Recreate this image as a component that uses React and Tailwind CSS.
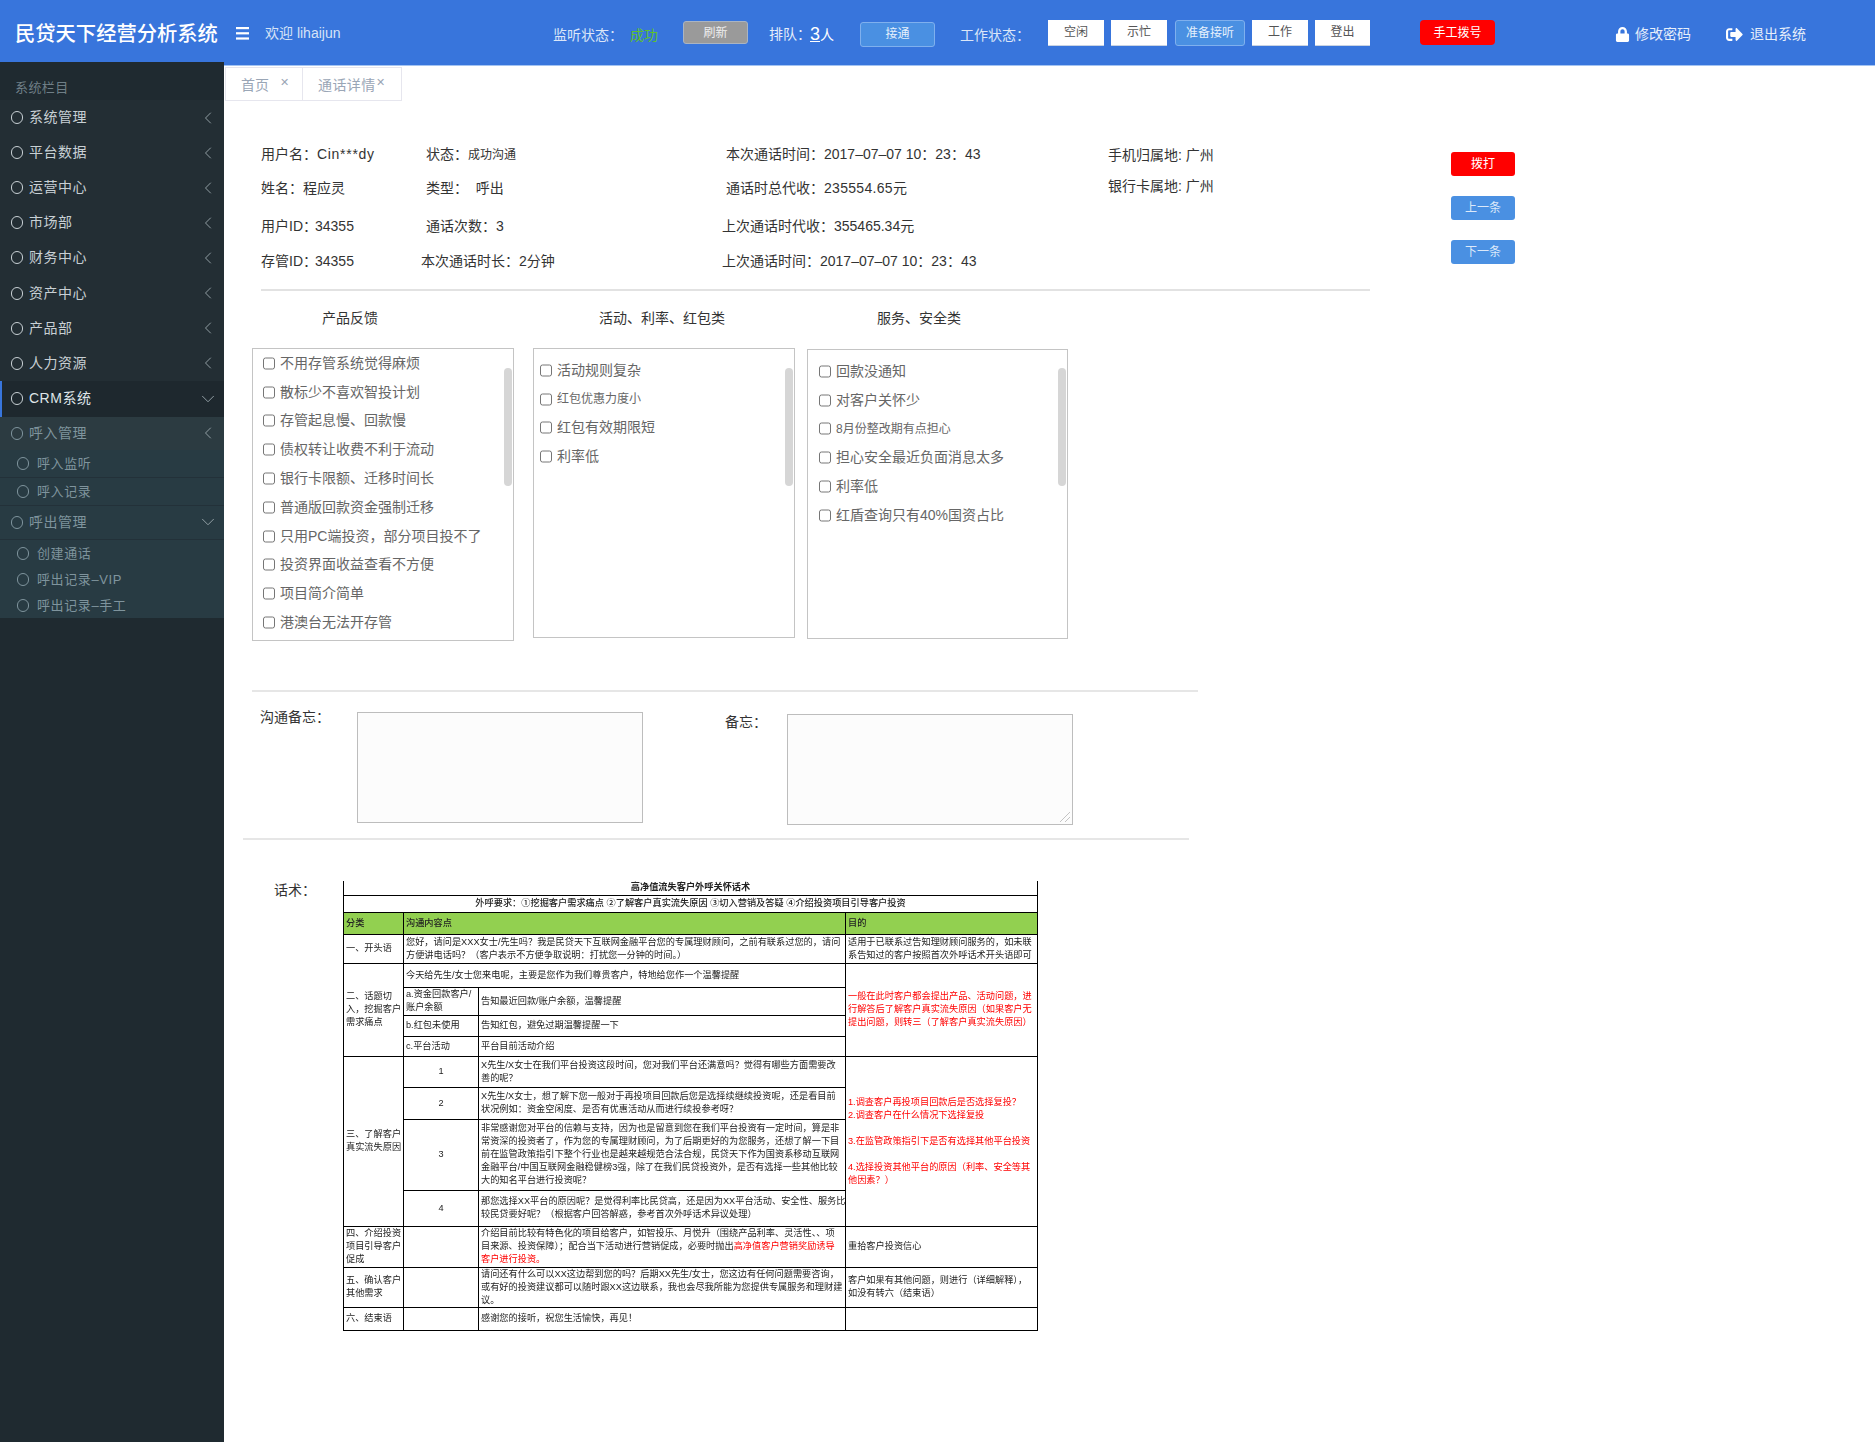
import { ChevronLeft, ChevronDown } from "lucide-react";
import { FaLock, FaSignOutAlt } from "react-icons/fa";

const font = { fontFamily: '"Liberation Sans", "Noto Sans CJK SC", sans-serif' };

const mainMenu = ["系统管理", "平台数据", "运营中心", "市场部", "财务中心", "资产中心", "产品部", "人力资源"];

const feedbackBoxes = [
  {
    title: "产品反馈",
    box: "w-[262px] h-[293px] pl-[10px]",
    bar: "top-[19px]",
    items: [
      "不用存管系统觉得麻烦",
      "散标少不喜欢智投计划",
      "存管起息慢、回款慢",
      "债权转让收费不利于流动",
      "银行卡限额、迁移时间长",
      "普通版回款资金强制迁移",
      "只用PC端投资，部分项目投不了",
      "投资界面收益查看不方便",
      "项目简介简单",
      "港澳台无法开存管",
    ],
  },
  {
    title: "活动、利率、红包类",
    box: "w-[262px] h-[290px] ml-[19px] pt-[7px] pl-[6px]",
    bar: "top-[19px]",
    items: ["活动规则复杂", "红包优惠力度小", "红包有效期限短", "利率低"],
  },
  {
    title: "服务、安全类",
    box: "w-[261px] h-[290px] ml-[12px] mt-[1px] pt-[7px] pl-[11px]",
    bar: "top-[18px]",
    items: ["回款没通知", "对客户关怀少", "8月份整改期有点担心", "担心安全最近负面消息太多", "利率低", "红盾查询只有40%国资占比"],
  },
];

const smallItems = ["红包优惠力度小", "8月份整改期有点担心"];

function Ring({ className = "" }) {
  return <span className={`block h-[13px] w-3 shrink-0 rounded-full border ${className}`} />;
}

function MenuRow({ label, open, className = "", textClass = "text-[#c8d0d4]", ringClass = "border-[#c8d0d4]" }) {
  return (
    <div className={`flex items-center pl-[11px] pr-3 text-[14px] tracking-[0.5px] ${className}`}>
      <Ring className={ringClass} />
      <span className={`ml-1.5 ${textClass}`}>{label}</span>
      {open ? (
        <ChevronDown size={22} strokeWidth={1} className="ml-auto -mr-[7px] text-[#9aa7ad]" />
      ) : (
        <ChevronLeft size={20} strokeWidth={1.1} className="ml-auto -mr-[6px] text-[#9aa7ad]" />
      )}
    </div>
  );
}

function SubRow({ label, className = "" }) {
  return (
    <div className={`flex items-center pl-[17px] text-[13px] tracking-[0.6px] text-[#7f949d] ${className}`}>
      <Ring className="border-[#7f949d]" />
      <span className="ml-2">{label}</span>
    </div>
  );
}

function Sidebar() {
  return (
    <aside className="relative z-10 -mt-[4px] h-[1380px] w-[224px] shrink-0 bg-[#1f2a30]">
      <div className="flex h-[38px] items-end pb-[3px] pl-[15px] text-[13px] tracking-[0.4px] text-[#6f7f87]">系统栏目</div>
      <div className="bg-[#232e34]">
        {mainMenu.map((label) => (
          <MenuRow key={label} label={label} className="h-[35.1px]" />
        ))}
      </div>
      <div className="flex h-[36px] items-center border-l-[2px] border-[#3875dc] bg-[#1e282e] pl-[9px] pr-3 text-[14px] tracking-[0.5px] text-[#dfe5e8]">
        <Ring className="border-[#c8d0d4]" />
        <span className="ml-1.5">CRM系统</span>
        <ChevronDown size={22} strokeWidth={1} className="ml-auto -mr-[7px] text-[#9aa7ad]" />
      </div>
      <MenuRow label="呼入管理" className="h-[33px] bg-[#2c3b41]" textClass="text-[#7f949d]" ringClass="border-[#7f949d]" />
      <div className="bg-[#283b43]">
        <SubRow label="呼入监听" className="h-[28px] border-b border-[#233139]" />
        <SubRow label="呼入记录" className="h-[28px] border-b border-[#233139]" />
        <MenuRow label="呼出管理" open className="h-[34px] border-b border-[#233139]" textClass="text-[#7f949d]" ringClass="border-[#7f949d]" />
        <SubRow label="创建通话" className="h-[27px]" />
        <SubRow label="呼出记录–VIP" className="h-[26px]" />
        <SubRow label="呼出记录–手工" className="h-[25px]" />
      </div>
    </aside>
  );
}

function HeaderButton({ children, className = "" }) {
  return <div className={`flex shrink-0 items-center justify-center rounded-[3px] text-[12px] ${className}`}>{children}</div>;
}

const whiteBtn = "h-[26px] bg-white text-[#555] border-b border-[#c9d3e2]";

function Header() {
  return (
    <header className="flex h-[66px] items-center border-b border-[#a3c3f2] bg-[#3875dc] text-[14px] text-white">
      <div className="mt-[4px] w-[236px] shrink-0 pl-[15px] text-[20.3px] font-medium text-white">民贷天下经营分析系统</div>
      <div className="mt-[2px] w-[29px] shrink-0">
        <svg width="13" height="13" viewBox="0 0 13 13" fill="white">
          <rect y="0" width="13" height="2.2" />
          <rect y="5.2" width="13" height="2.2" />
          <rect y="10.4" width="13" height="2.2" />
        </svg>
      </div>
      <div className="mt-[2px] w-[288px] shrink-0 text-[#d6e3f7]">欢迎 lihaijun</div>
      <div className="mt-[6px] w-[77px] shrink-0 text-[#dbe6f8]">监听状态：</div>
      <div className="mt-[6px] w-[53px] shrink-0 text-[#5fc02c]">成功</div>
      <HeaderButton className="h-[23px] w-[65px] border border-[#aab4c2] bg-[#9a9a9a] text-[#eeeeee]">刷新</HeaderButton>
      <div className="ml-[21px] mt-[4px] w-[41px] shrink-0 whitespace-nowrap text-[#e6eefa]">排队：</div>
      <div className="mt-[4px] w-[50px] shrink-0 text-[14px]">
        <span className="text-[18px] underline">3</span>人
      </div>
      <HeaderButton className="mt-[3px] h-[25px] w-[75px] border border-[#7fb0ee] bg-[#4a90e2] text-[#e6f0fc]">接通</HeaderButton>
      <div className="ml-[25px] mt-[5px] w-[88px] shrink-0 text-[#dbe6f8]">工作状态：</div>
      <HeaderButton className={`${whiteBtn} w-[56px] rounded-none`}>空闲</HeaderButton>
      <HeaderButton className={`${whiteBtn} ml-[7px] w-[56px] rounded-none`}>示忙</HeaderButton>
      <HeaderButton className="ml-[8px] h-[26px] w-[70px] border border-[#7fb0ee] bg-[#4a90e2] text-[#e6f0fc]">准备接听</HeaderButton>
      <HeaderButton className={`${whiteBtn} ml-[7px] w-[56px] rounded-none`}>工作</HeaderButton>
      <HeaderButton className={`${whiteBtn} ml-[7px] w-[55px] rounded-none`}>登出</HeaderButton>
      <HeaderButton className="ml-[50px] h-[25px] w-[75px] rounded-[4px] bg-[#ff0000] text-white">手工拨号</HeaderButton>
      <FaLock size={15} className="ml-[120px] mt-[3px] shrink-0 text-white" />
      <span className="ml-[5px] mt-[3px] shrink-0 text-[#e6eefa]">修改密码</span>
      <FaSignOutAlt size={17} className="ml-[35px] mt-[3px] shrink-0 text-white" />
      <span className="ml-[7px] mt-[3px] shrink-0 text-[#e6eefa]">退出系统</span>
    </header>
  );
}

function Tabs() {
  return (
    <div className="flex h-[34px] text-[14px] text-[#9aa6b6]">
      <div className="flex w-[78px] items-center border border-[#e6e6ee] pl-[15px] pt-[2px]">
        首页
        <span className="-mt-[6px] ml-[11px] text-[11px]">✕</span>
      </div>
      <div className="flex w-[99px] items-center border border-l-0 border-[#e6e6ee] pl-[15px] pt-[2px] tracking-[0.4px]">
        通话详情
        <span className="-mt-[6px] text-[11px]">✕</span>
      </div>
    </div>
  );
}

function InfoBlock() {
  const rows = [
    { h: "h-[34px]", cols: [<>用户名：<span className="tracking-[0.7px]">Cin***dy</span></>, <>状态：<span className="text-[12px]">成功沟通</span></>, "本次通话时间：2017–07–07 10：23：43"] },
    { h: "h-[34px]", cols: ["姓名：程应灵", "类型：  呼出", <>通话时总代收：<span className="tracking-[0.3px]">235554.65元</span></>] },
    { h: "h-[42px]", cols: [<>用户ID：<span className="-ml-[2px]">34355</span></>, "通话次数：3", <span className="-ml-1">上次通话时代收：355465.34元</span>] },
    { h: "h-[28px]", cols: [<>存管ID：<span className="-ml-[2px]">34355</span></>, <span className="-ml-[5px]">本次通话时长：2分钟</span>, <span className="-ml-1">上次通话时间：2017–07–07 10：23：43</span>] },
  ];
  return (
    <div className="mt-[36px] flex pl-[36px] text-[14px] text-[#333]">
      <div className="w-[847px] shrink-0">
        {rows.map((row, i) => (
          <div key={i} className={`grid grid-cols-[165px_300px_382px] items-center whitespace-pre ${row.h}`}>
            {row.cols.map((col, j) => (
              <div key={j}>{col}</div>
            ))}
          </div>
        ))}
      </div>
      <div className="w-[343px] shrink-0 pt-[3px] leading-[31px]">
        <div>手机归属地: 广州</div>
        <div>银行卡属地: 广州</div>
      </div>
      <div className="flex w-[64px] flex-col gap-5 pt-[15px] text-[12px] text-white">
        <div className="flex h-6 items-center justify-center rounded-[3px] bg-[#ff0000]">拨打</div>
        <div className="flex h-6 items-center justify-center rounded-[3px] bg-[#4a90e2] text-[#dce9fa]">上一条</div>
        <div className="flex h-6 items-center justify-center rounded-[3px] bg-[#4a90e2] text-[#dce9fa]">下一条</div>
      </div>
    </div>
  );
}

function Feedback() {
  return (
    <>
      <div className="mt-[17px] flex h-5 items-center pl-[97px] text-[14px] leading-5 text-[#333]">
        <span className="w-[277px] shrink-0">产品反馈</span>
        <span className="w-[278px] shrink-0">活动、利率、红包类</span>
        <span className="shrink-0">服务、安全类</span>
      </div>
      <div className="mt-[20px] flex items-start pl-[27px]">
        {feedbackBoxes.map((group) => (
          <div key={group.title} className={`relative shrink-0 border border-[#c4c4c4] ${group.box}`}>
            {group.items.map((item) => (
              <label key={item} className="flex h-[28.8px] items-center gap-[5px] text-[14px] text-[#666]">
                <input type="checkbox" className="m-0 h-[13px] w-[12px] shrink-0" readOnly />
                <span className={smallItems.includes(item) ? "text-[12px]" : ""}>{item}</span>
              </label>
            ))}
            <div className={`absolute right-[1px] w-2 h-[118px] rounded-full bg-[#d6d6d6] ${group.bar}`} />
          </div>
        ))}
      </div>
    </>
  );
}

function Notes() {
  return (
    <>
      <div className="ml-[27px] mt-[49px] h-0.5 w-[946px] bg-[#e6e6e6]" />
      <div className="ml-[35px] mt-[20px] flex items-start text-[14px] text-[#333]">
        <div className="-mt-[5px] w-[97px] shrink-0 leading-5">沟通备忘：</div>
        <textarea className="h-[111px] w-[286px] shrink-0 resize-none border border-[#bdbdbd] bg-[#fcfcfc]" readOnly />
        <div className="ml-[82px] w-[62px] shrink-0 leading-5">备忘：</div>
        <div className="relative mt-[2px] h-[111px] w-[286px] shrink-0">
          <textarea className="block h-full w-full resize-none border border-[#bdbdbd] bg-[#fcfcfc]" readOnly />
          <svg width="12" height="12" viewBox="0 0 12 12" className="absolute bottom-[2px] right-[2px]" stroke="#c4c4c4" fill="none">
            <path d="M1 11 L11 1 M6 11 L11 6" />
          </svg>
        </div>
      </div>
      <div className="ml-[18px] mt-[13px] h-0.5 w-[946px] bg-[#e6e6e6]" />
    </>
  );
}

const cell = "border border-black px-[2px] py-0 align-middle whitespace-nowrap overflow-hidden";
const red = "text-[#ff0000]";

function ScriptTable() {
  return (
    <table className="w-[694px] table-fixed border-collapse text-[9.2px] leading-[13px] text-[#222] blur-[0.3px]">
      <colgroup>
        <col className="w-[60px]" />
        <col className="w-[75px]" />
        <col className="w-[367px]" />
        <col className="w-[192px]" />
      </colgroup>
      <tbody>
        <tr className="h-[14px]">
          <td colSpan={4} className={`${cell} border-t-0 text-center font-bold`}>高净值流失客户外呼关怀话术</td>
        </tr>
        <tr className="h-[17px]">
          <td colSpan={4} className={`${cell} text-center font-medium`}>外呼要求：①挖掘客户需求痛点 ②了解客户真实流失原因 ③切入营销及答疑 ④介绍投资项目引导客户投资</td>
        </tr>
        <tr className="h-[22px] bg-[#92d050] font-medium">
          <td className={cell}>分类</td>
          <td colSpan={2} className={cell}>沟通内容点</td>
          <td className={cell}>目的</td>
        </tr>
        <tr className="h-[29px]">
          <td className={cell}>一、开头语</td>
          <td colSpan={2} className={cell}>您好，请问是XXX女士/先生吗？我是民贷天下互联网金融平台您的专属理财顾问，之前有联系过您的，请问<br />方便讲电话吗？（客户表示不方便争取说明：打扰您一分钟的时间。）</td>
          <td className={cell}>适用于已联系过告知理财顾问服务的，如未联<br />系告知过的客户按照首次外呼话术开头语即可</td>
        </tr>
        <tr className="h-[24px]">
          <td rowSpan={4} className={cell}>二、话题切<br />入，挖掘客户<br />需求痛点</td>
          <td colSpan={2} className={cell}>今天给先生/女士您来电呢，主要是您作为我们尊贵客户，特地给您作一个温馨提醒</td>
          <td rowSpan={4} className={`${cell} ${red}`}>一般在此时客户都会提出产品、活动问题，进<br />行解答后了解客户真实流失原因（如果客户无<br />提出问题，则转三（了解客户真实流失原因）</td>
        </tr>
        <tr className="h-[28px]">
          <td className={cell}>a.资金回款客户/<br />账户余额</td>
          <td className={cell}>告知最近回款/账户余额，温馨提醒</td>
        </tr>
        <tr className="h-[21px]">
          <td className={cell}>b.红包未使用</td>
          <td className={cell}>告知红包，避免过期温馨提醒一下</td>
        </tr>
        <tr className="h-[20px]">
          <td className={cell}>c.平台活动</td>
          <td className={cell}>平台目前活动介绍</td>
        </tr>
        <tr className="h-[31px]">
          <td rowSpan={4} className={cell}>三、了解客户<br />真实流失原因</td>
          <td className={`${cell} text-center`}>1</td>
          <td className={cell}>X先生/X女士在我们平台投资这段时间，您对我们平台还满意吗？觉得有哪些方面需要改<br />善的呢？</td>
          <td rowSpan={4} className={`${cell} ${red}`}>
            1.调查客户再投项目回款后是否选择复投？<br />2.调查客户在什么情况下选择复投<br /><br />3.在监管政策指引下是否有选择其他平台投资<br /><br />4.选择投资其他平台的原因（利率、安全等其<br />他因素？）
          </td>
        </tr>
        <tr className="h-[32px]">
          <td className={`${cell} text-center`}>2</td>
          <td className={cell}>X先生/X女士，想了解下您一般对于再投项目回款后您是选择续继续投资呢，还是看目前<br />状况例如：资金空闲度、是否有优惠活动从而进行续投参考呀？</td>
        </tr>
        <tr className="h-[71px]">
          <td className={`${cell} text-center`}>3</td>
          <td className={cell}>非常感谢您对平台的信赖与支持，因为也是留意到您在我们平台投资有一定时间，算是非<br />常资深的投资者了，作为您的专属理财顾问，为了后期更好的为您服务，还想了解一下目<br />前在监管政策指引下整个行业也是越来越规范合法合规，民贷天下作为国资系移动互联网<br />金融平台/中国互联网金融稳健榜3强，除了在我们民贷投资外，是否有选择一些其他比较<br />大的知名平台进行投资呢？</td>
        </tr>
        <tr className="h-[36px]">
          <td className={`${cell} text-center`}>4</td>
          <td className={cell}>那您选择XX平台的原因呢？是觉得利率比民贷高，还是因为XX平台活动、安全性、服务比<br />较民贷要好呢？（根据客户回答解惑，参考首次外呼话术异议处理）</td>
        </tr>
        <tr className="h-[41px]">
          <td className={cell}>四、介绍投资<br />项目引导客户<br />促成</td>
          <td className={cell} />
          <td className={cell}>介绍目前比较有特色化的项目给客户，如智投乐、月悦升（围绕产品利率、灵活性、、项<br />目来源、投资保障）；配合当下活动进行营销促成，必要时抛出<span className={red}>高净值客户营销奖励诱导<br />客户进行投资。</span></td>
          <td className={cell}>重拾客户投资信心</td>
        </tr>
        <tr className="h-[39px]">
          <td className={cell}>五、确认客户<br />其他需求</td>
          <td className={cell} />
          <td className={cell}>请问还有什么可以XX这边帮到您的吗？后期XX先生/女士，您这边有任何问题需要咨询，<br />或有好的投资建议都可以随时跟XX这边联系，我也会尽我所能为您提供专属服务和理财建<br />议。</td>
          <td className={cell}>客户如果有其他问题，则进行（详细解释），<br />如没有转六（结束语）</td>
        </tr>
        <tr className="h-[23px]">
          <td className={cell}>六、结束语</td>
          <td className={cell} />
          <td className={cell}>感谢您的接听，祝您生活愉快，再见！</td>
          <td className={cell} />
        </tr>
      </tbody>
    </table>
  );
}

export default function App() {
  return (
    <div className="h-[1442px] overflow-hidden bg-white" style={font}>
      <Header />
      <div className="flex">
        <Sidebar />
        <main className="flex-1 pl-px pt-px">
          <Tabs />
          <InfoBlock />
          <div className="ml-[36px] mt-[14px] h-0.5 w-[1109px] bg-[#e2e2e2]" />
          <Feedback />
          <Notes />
          <div className="ml-[49px] mt-[41px] flex items-start">
            <div className="-mt-px w-[69px] shrink-0 text-[14px] leading-5 text-[#333]">话术：</div>
            <ScriptTable />
          </div>
        </main>
      </div>
    </div>
  );
}
